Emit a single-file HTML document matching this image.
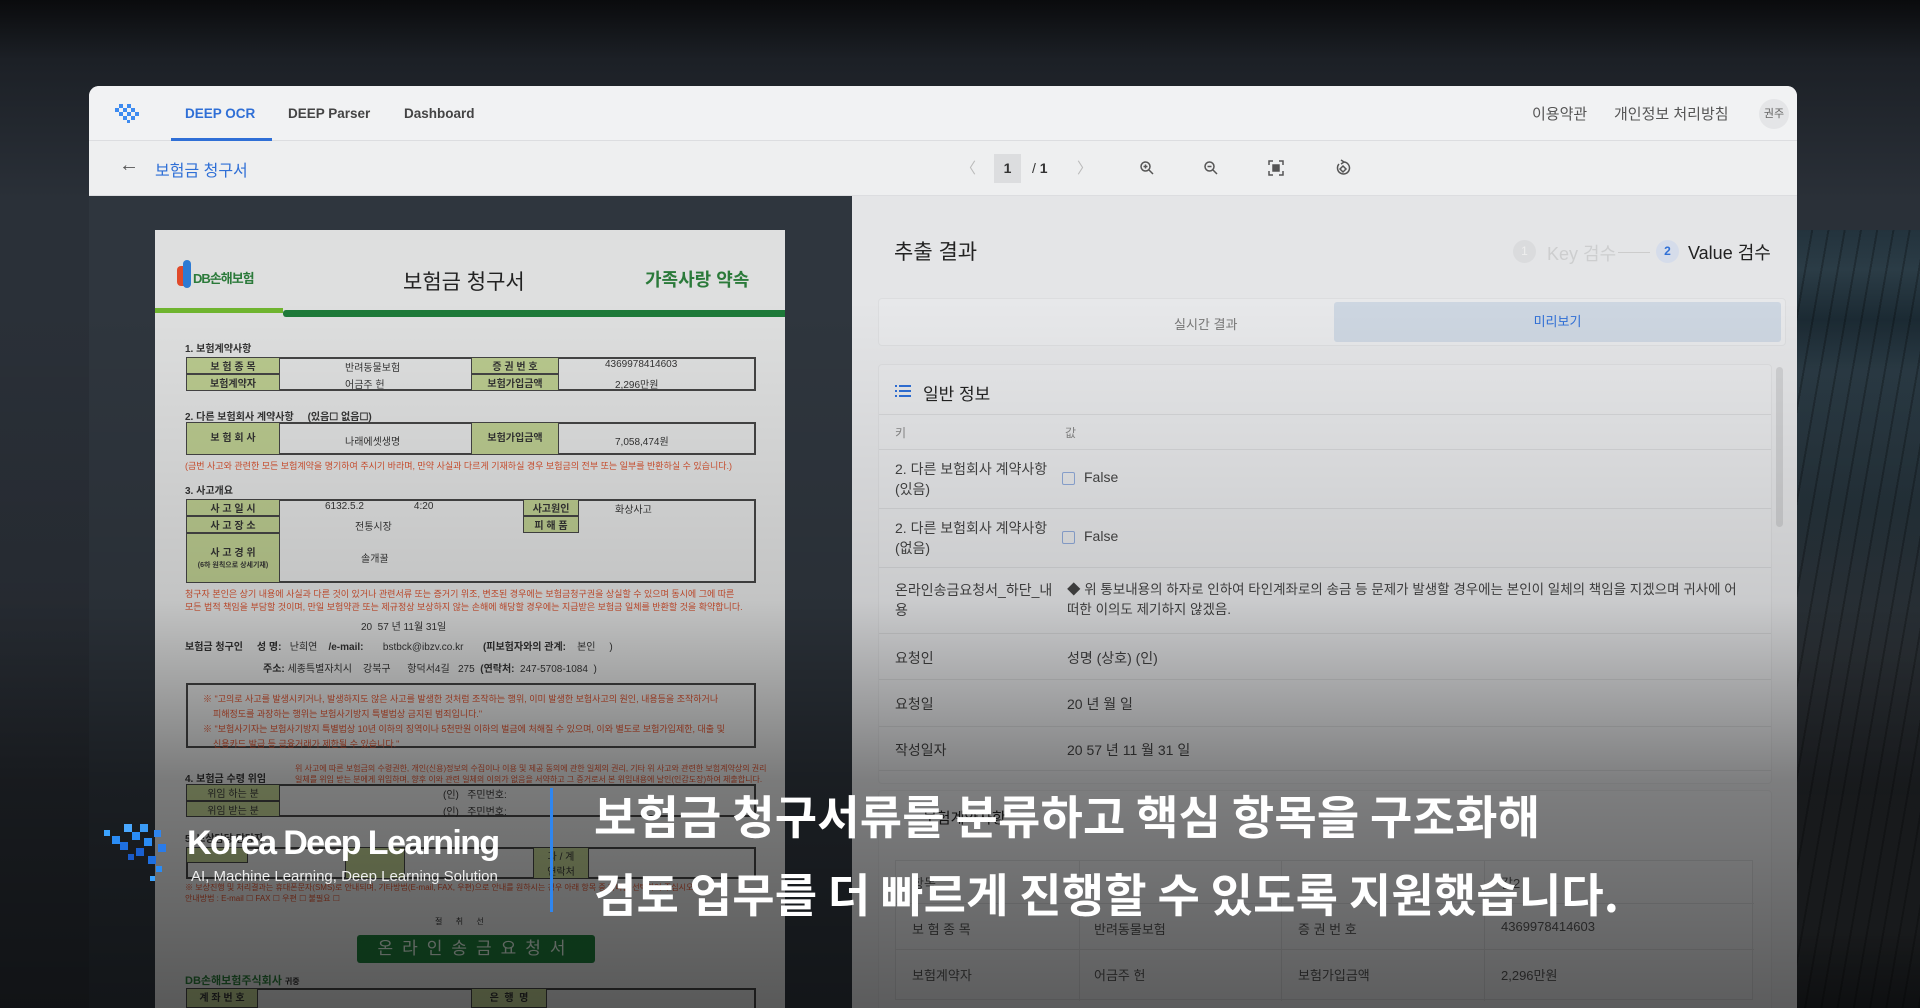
<!DOCTYPE html>
<html><head><meta charset="utf-8">
<style>
*{margin:0;padding:0;box-sizing:border-box}
body{width:1920px;height:1008px;overflow:hidden;position:relative;font-family:"Liberation Sans","Noto Sans CJK KR",sans-serif;background:#16191d}
.a{position:absolute}
.bg{left:0;top:0;width:1920px;height:1008px;background:linear-gradient(180deg,#0a0b0d 0,#1c2026 60px,#2a3038 200px,#2b3037 1008px)}
.bldg{left:1797px;top:230px;width:123px;height:778px;background:
repeating-linear-gradient(100deg,transparent 0 14px,rgba(0,0,0,.25) 14px 16px),
linear-gradient(180deg,#23333d 0,#2b3c46 40px,#1b2a33 90px,#2a3a44 140px,#25323a 280px,#30363c 420px,#2b2f34 560px,#363a3e 700px,#22262a 778px)}
.win{left:89px;top:86px;width:1708px;height:922px;background:#f1f2f3;border-radius:10px 10px 0 0;overflow:hidden}
.nav{left:0;top:0;width:1708px;height:55px;border-bottom:1px solid #dcdde0;background:#f1f2f3}
.tb{left:0;top:55px;width:1708px;height:55px;border-bottom:1px solid #dcdde0;background:#eeeff0}
.t{white-space:nowrap}
.lp{left:0;top:110px;width:763px;height:812px;background:#2f363e}
.paper{left:66px;top:34px;width:630px;height:800px;background:#dedfdf;overflow:hidden;color:#333;font-size:10px}
.rp{left:763px;top:110px;width:945px;height:812px;background:#e4e5e7}
.cell{position:absolute;border:1px solid #444}
.lab{position:absolute;background:#b9c98e;border:1px solid #444;text-align:center;font-weight:bold;color:#333}
.red{color:#d2502f;font-size:9px}
.row{position:absolute;left:0;width:894px;border-top:1px solid #d6d7d9;font-size:14px;color:#444}
.shade{left:0;top:0;width:1920px;height:1008px;background:linear-gradient(180deg,rgba(0,0,0,0) 0,rgba(0,0,0,0) 300px,rgba(0,0,0,.12) 600px,rgba(0,0,0,.45) 780px,rgba(0,0,0,.6) 1008px)}
.sub{left:594px;color:#fff;font-family:"Noto Sans CJK KR",sans-serif;font-weight:700;font-size:46px;letter-spacing:0.2px;white-space:nowrap}
</style></head><body>
<div class="a bg"></div>
<div class="a bldg"></div>
<div class="a win">
 <div class="a nav">
  <svg class="a" style="left:24px;top:14px" width="32" height="30" viewBox="0 0 32 30">
   <g fill="#3d8bf0"><rect x="2" y="8" width="4" height="4"/><rect x="6" y="4" width="4" height="4"/><rect x="10" y="8" width="4" height="4"/><rect x="14" y="4" width="4" height="4"/><rect x="18" y="8" width="4" height="4"/><rect x="6" y="12" width="4" height="4"/><rect x="14" y="12" width="4" height="4"/><rect x="22" y="12" width="4" height="4"/><rect x="10" y="16" width="4" height="4"/><rect x="18" y="16" width="4" height="4"/><rect x="14" y="20" width="3" height="3"/></g></svg>
  <div class="a t" style="left:96px;top:20px;font-size:13.5px;font-weight:bold;color:#2f6fd6">DEEP OCR</div>
  <div class="a" style="left:82px;top:52px;width:101px;height:3px;background:#2f6fd6"></div>
  <div class="a t" style="left:199px;top:20px;font-size:13.5px;font-weight:bold;color:#444">DEEP Parser</div>
  <div class="a t" style="left:315px;top:20px;font-size:13.5px;font-weight:bold;color:#444">Dashboard</div>
  <div class="a t" style="left:1443px;top:17px;font-size:15px;color:#555">이용약관</div>
  <div class="a t" style="left:1525px;top:17px;font-size:15px;color:#555">개인정보 처리방침</div>
  <div class="a" style="left:1670px;top:13px;width:30px;height:30px;border-radius:50%;background:#e4e5e7;font-size:11px;color:#666;text-align:center;line-height:30px">권주</div>
 </div>
 <div class="a tb">
  <div class="a t" style="left:30px;top:13px;font-size:20px;color:#555">←</div>
  <div class="a t" style="left:66px;top:16px;font-size:16px;color:#2f6fd6">보험금 청구서</div>
  <div class="a t" style="left:872px;top:16px;font-size:15px;color:#bbb">〈</div>
  <div class="a" style="left:905px;top:13px;width:27px;height:29px;background:#dcdddf;text-align:center;line-height:29px;font-size:14px;font-weight:bold;color:#333">1</div>
  <div class="a t" style="left:943px;top:19px;font-size:14px;color:#333">/ <b>1</b></div>
  <div class="a t" style="left:988px;top:16px;font-size:15px;color:#bbb">〉</div>
  <svg class="a" style="left:1050px;top:19px" width="16" height="16" viewBox="0 0 16 16" fill="none" stroke="#555" stroke-width="1.5"><circle cx="6.5" cy="6.5" r="4.5"/><path d="M10 10l4 4M4.5 6.5h4M6.5 4.5v4"/></svg>
  <svg class="a" style="left:1114px;top:19px" width="16" height="16" viewBox="0 0 16 16" fill="none" stroke="#555" stroke-width="1.5"><circle cx="6.5" cy="6.5" r="4.5"/><path d="M10 10l4 4M4.5 6.5h4"/></svg>
  <svg class="a" style="left:1179px;top:19px" width="16" height="16" viewBox="0 0 16 16" fill="none" stroke="#555" stroke-width="1.5"><path d="M1 5V1h4M11 1h4v4M15 11v4h-4M5 15H1v-4"/><rect x="5" y="5" width="6" height="6" fill="#555"/></svg>
  <svg class="a" style="left:1246px;top:18px" width="16" height="18" viewBox="0 0 16 18" fill="none" stroke="#555" stroke-width="1.5"><path d="M4 5a6 6 0 1 0 5-2"/><path d="M6 1l3 2-3 2"/><path d="M8 7l3 3-3 3-3-3z"/></svg>
 </div>
 <div class="a lp">
  <div class="a paper">
   <div class="a" style="left:22px;top:36px;width:8px;height:20px;background:#e04a2a;border-radius:4px 0 0 4px"></div>
   <div class="a" style="left:28px;top:30px;width:8px;height:28px;background:#2d7bd4;border-radius:4px"></div>
   <div class="a t" style="left:38px;top:38px;font-size:13px;font-weight:bold;color:#2b7a3a;letter-spacing:-1px">DB손해보험</div>
   <div class="a t" style="left:248px;top:36px;font-size:21px;color:#222">보험금 청구서</div>
   <div class="a t" style="left:490px;top:36px;font-size:18px;color:#2b7a3a;font-weight:bold">가족사랑 약속</div>
   <div class="a" style="left:0;top:78px;width:128px;height:5px;background:#6fb52f"></div>
   <div class="a" style="left:128px;top:80px;width:502px;height:7px;background:#1e7a39;border-radius:3px 0 0 3px"></div>
   <div class="a t" style="left:30px;top:110px;font-weight:bold">1. 보험계약사항</div>
   <div class="cell" style="left:31px;top:127px;width:570px;height:34px;border-width:2px"></div>
   <div class="lab" style="left:31px;top:127px;width:94px;height:17px">보 험 종 목</div>
   <div class="lab" style="left:31px;top:144px;width:94px;height:17px">보험계약자</div>
   <div class="lab" style="left:316px;top:127px;width:88px;height:17px">증 권 번 호</div>
   <div class="lab" style="left:316px;top:144px;width:88px;height:17px">보험가입금액</div>
   <div class="a t" style="left:190px;top:129px">반려동물보험</div><div class="a t" style="left:190px;top:146px">어금주 헌</div>
   <div class="a t" style="left:450px;top:129px">4369978414603</div><div class="a t" style="left:460px;top:146px">2,296만원</div>
   <div class="a t" style="left:30px;top:178px;font-weight:bold">2. 다른 보험회사 계약사항 &nbsp;&nbsp;&nbsp;&nbsp;(있음☐ 없음☐)</div>
   <div class="cell" style="left:31px;top:192px;width:570px;height:33px;border-width:2px"></div>
   <div class="lab" style="left:31px;top:192px;width:94px;height:33px;line-height:31px">보 험 회 사</div>
   <div class="lab" style="left:316px;top:192px;width:88px;height:33px;line-height:31px">보험가입금액</div>
   <div class="a t" style="left:190px;top:203px">나래에셋생명</div><div class="a t" style="left:460px;top:203px">7,058,474원</div>
   <div class="a t red" style="left:30px;top:229px">(금번 사고와 관련한 모든 보험계약을 명기하여 주시기 바라며, 만약 사실과 다르게 기재하실 경우 보험금의 전부 또는 일부를 반환하실 수 있습니다.)</div>
   <div class="a t" style="left:30px;top:252px;font-weight:bold">3. 사고개요</div>
   <div class="cell" style="left:31px;top:269px;width:570px;height:84px;border-width:2px"></div>
   <div class="lab" style="left:31px;top:269px;width:94px;height:17px">사 고 일 시</div>
   <div class="lab" style="left:31px;top:286px;width:94px;height:17px">사 고 장 소</div>
   <div class="lab" style="left:31px;top:303px;width:94px;height:50px;padding-top:10px">사 고 경 위<br><span style="font-size:7px">(6하 원칙으로 상세기재)</span></div>
   <div class="lab" style="left:368px;top:269px;width:56px;height:17px">사고원인</div>
   <div class="lab" style="left:368px;top:286px;width:56px;height:17px">피 해 품</div>
   <div class="a t" style="left:170px;top:271px">6132.5.2 &nbsp;&nbsp;&nbsp;&nbsp;&nbsp;&nbsp;&nbsp;&nbsp;&nbsp;&nbsp;&nbsp;&nbsp;&nbsp;&nbsp;&nbsp;&nbsp;&nbsp;4:20</div>
   <div class="a t" style="left:460px;top:271px">화상사고</div>
   <div class="a t" style="left:200px;top:288px">전통시장</div><div class="a t" style="left:206px;top:320px">솔개꿀</div>
   <div class="a t red" style="left:30px;top:357px">청구자 본인은 상기 내용에 사실과 다른 것이 있거나 관련서류 또는 증거기 위조, 변조된 경우에는 보험금청구권을 상실할 수 있으며 동시에 그에 따른<br>모든 법적 책임을 부담할 것이며, 만일 보험약관 또는 제규정상 보상하지 않는 손해에 해당할 경우에는 지급받은 보험금 일체를 반환할 것을 확약합니다.</div>
   <div class="a t" style="left:206px;top:388px">20 &nbsp;57 년 11월 31일</div>
   <div class="a t" style="left:30px;top:408px"><b>보험금 청구인</b> &nbsp;&nbsp;&nbsp;&nbsp;<b>성 명:</b> &nbsp;&nbsp;난희연 &nbsp;&nbsp;&nbsp;<b>/e-mail:</b> &nbsp;&nbsp;&nbsp;&nbsp;&nbsp;&nbsp;bstbck@ibzv.co.kr &nbsp;&nbsp;&nbsp;&nbsp;&nbsp;&nbsp;<b>(피보험자와의 관계:</b> &nbsp;&nbsp;&nbsp;본인 &nbsp;&nbsp;&nbsp;&nbsp;)</div>
   <div class="a t" style="left:108px;top:430px"><b>주소:</b> 세종특별자치시 &nbsp;&nbsp;&nbsp;강북구 &nbsp;&nbsp;&nbsp;&nbsp;&nbsp;항덕서4길 &nbsp;&nbsp;275 &nbsp;<b>(연락처:</b> &nbsp;247-5708-1084 &nbsp;)</div>
   <div class="cell" style="left:31px;top:453px;width:570px;height:65px;border-width:2px"></div>
   <div class="a t red" style="left:48px;top:462px;line-height:15px">※ "고의로 사고를 발생시키거나, 발생하지도 않은 사고를 발생한 것처럼 조작하는 행위, 이미 발생한 보험사고의 원인, 내용등을 조작하거나<br>&nbsp;&nbsp;&nbsp;&nbsp;피해정도를 과장하는 행위는 보험사기방지 특별법상 금지된 범죄입니다."<br>※ "보험사기자는 보험사기방지 특별법상 10년 이하의 징역이나 5천만원 이하의 벌금에 처해질 수 있으며, 이와 별도로 보험가입제한, 대출 및<br>&nbsp;&nbsp;&nbsp;&nbsp;신용카드 발급 등 금융거래가 제한될 수 있습니다."</div>
   <div class="a t" style="left:30px;top:540px;font-weight:bold">4. 보험금 수령 위임</div>
   <div class="a t red" style="left:140px;top:533px;font-size:8px">위 사고에 따른 보험금의 수령권한, 개인(신용)정보의 수집이나 이용 및 제공 동의에 관한 일체의 권리, 기타 위 사고와 관련한 보험계약상의 권리<br>일체를 위임 받는 분에게 위임하며, 향후 이와 관련 일체의 이의가 없음을 서약하고 그 증거로서 본 위임내용에 날인(인감도장)하여 제출합니다.</div>
   <div class="cell" style="left:31px;top:554px;width:570px;height:33px;border-width:2px"></div>
   <div class="lab" style="left:31px;top:554px;width:94px;height:17px;font-weight:normal">위임 하는 분</div>
   <div class="lab" style="left:31px;top:571px;width:94px;height:16px;font-weight:normal">위임 받는 분</div>
   <div class="a t" style="left:288px;top:556px">(인) &nbsp;&nbsp;주민번호:</div><div class="a t" style="left:288px;top:573px">(인) &nbsp;&nbsp;주민번호:</div>
   <div class="a t" style="left:30px;top:600px;font-weight:bold">5. 보상담당 담당자</div>
   <div class="cell" style="left:31px;top:617px;width:570px;height:32px;border-width:2px"></div>
   <div class="lab" style="left:31px;top:617px;width:62px;height:16px"></div>
   <div class="lab" style="left:190px;top:617px;width:60px;height:32px"></div>
   <div class="lab" style="left:378px;top:617px;width:56px;height:32px;font-weight:normal">과 / 계<br>연락처</div>
   <div class="a t red" style="left:30px;top:652px;font-size:8px">※ 보상진행 및 처리결과는 휴대폰문자(SMS)로 안내되며, 기타방법(E-mail, FAX, 우편)으로 안내를 원하시는 경우 아래 항목 중 하나를 선택하여 주십시오.<br>안내방법 : E-mail ☐ FAX ☐ 우편 ☐ 불필요 ☐</div>
   <div class="a t" style="left:280px;top:686px;font-size:8px">절 &nbsp;&nbsp;&nbsp;&nbsp;&nbsp;취 &nbsp;&nbsp;&nbsp;&nbsp;&nbsp;선</div>
   <div class="a" style="left:202px;top:705px;width:238px;height:28px;background:#1e7a39;border-radius:3px;color:#d8e8dc;font-size:17px;letter-spacing:9px;text-align:center;line-height:28px">온라인송금요청서</div>
   <div class="a t" style="left:30px;top:742px;font-size:11px;font-weight:bold;color:#2b7a3a">DB손해보험주식회사 <span style="font-size:8px;color:#333">귀중</span></div>
   <div class="cell" style="left:31px;top:758px;width:570px;height:40px;border-width:2px"></div>
   <div class="lab" style="left:31px;top:758px;width:72px;height:20px">계 좌 번 호</div>
   <div class="lab" style="left:316px;top:758px;width:76px;height:20px">은 &nbsp;행 &nbsp;명</div>
  </div>
 </div>
 <div class="a rp">
  <div class="a t" style="left:42px;top:40px;font-size:21px;color:#222">추출 결과</div>
  <div class="a" style="left:661px;top:44px;width:23px;height:23px;border-radius:50%;background:#dadbdd;color:#eee;font-size:12px;text-align:center;line-height:23px">1</div>
  <div class="a t" style="left:695px;top:44px;font-size:18px;color:#cdcecf">Key 검수</div>
  <div class="a" style="left:766px;top:56px;width:32px;height:1px;background:#ccc"></div>
  <div class="a" style="left:804px;top:44px;width:23px;height:23px;border-radius:50%;background:#d5dcea;color:#2f6fd6;font-size:12px;text-align:center;line-height:23px;font-weight:bold">2</div>
  <div class="a t" style="left:836px;top:43px;font-size:18px;color:#222">Value 검수</div>
  <div class="a" style="left:26px;top:102px;width:908px;height:48px;border:1px solid #dcdddf;border-radius:4px;background:#e7e8ea"></div>
  <div class="a t" style="left:322px;top:118px;font-size:13px;color:#777">실시간 결과</div>
  <div class="a" style="left:482px;top:106px;width:447px;height:40px;background:#cdd6e1;border-radius:3px;text-align:center;line-height:40px;font-size:13px;color:#2f6fd6">미리보기</div>
  <div class="a" style="left:26px;top:168px;width:894px;height:420px;border:1px solid #dcdddf;border-radius:4px;background:#e6e7e9;overflow:hidden">
   <svg class="a" style="left:16px;top:19px" width="16" height="14" viewBox="0 0 16 14" fill="#2f6fd6"><rect x="0" y="1" width="2" height="2"/><rect x="4" y="1" width="12" height="2"/><rect x="0" y="6" width="2" height="2"/><rect x="4" y="6" width="12" height="2"/><rect x="0" y="11" width="2" height="2"/><rect x="4" y="11" width="12" height="2"/></svg>
   <div class="a t" style="left:44px;top:15px;font-size:17px;color:#222">일반 정보</div>
   <div class="row" style="top:49px;height:35px"><span class="a" style="left:16px;top:9px;font-size:12px;color:#888">키</span><span class="a" style="left:186px;top:9px;font-size:12px;color:#888">값</span></div>
   <div class="row" style="top:84px;height:59px"><span class="a" style="left:16px;top:9px;line-height:20px">2. 다른 보험회사 계약사항<br>(있음)</span><span class="a" style="left:183px;top:22px;width:13px;height:13px;border:1.5px solid #8fa9d8;border-radius:2px"></span><span class="a" style="left:205px;top:19px">False</span></div>
   <div class="row" style="top:143px;height:59px"><span class="a" style="left:16px;top:9px;line-height:20px">2. 다른 보험회사 계약사항<br>(없음)</span><span class="a" style="left:183px;top:22px;width:13px;height:13px;border:1.5px solid #8fa9d8;border-radius:2px"></span><span class="a" style="left:205px;top:19px">False</span></div>
   <div class="row" style="top:202px;height:66px"><span class="a" style="left:16px;top:12px;line-height:20px">온라인송금요청서_하단_내<br>용</span><span class="a" style="left:188px;top:12px;line-height:20px;font-size:13.5px;width:680px">◆ 위 통보내용의 하자로 인하여 타인계좌로의 송금 등 문제가 발생할 경우에는 본인이 일체의 책임을 지겠으며 귀사에 어떠한 이의도 제기하지 않겠음.</span></div>
   <div class="row" style="top:268px;height:46px"><span class="a" style="left:16px;top:14px">요청인</span><span class="a" style="left:188px;top:14px">성명 (상호) (인)</span></div>
   <div class="row" style="top:314px;height:47px"><span class="a" style="left:16px;top:14px">요청일</span><span class="a" style="left:188px;top:14px">20 년 월 일</span></div>
   <div class="row" style="top:361px;height:44px"><span class="a" style="left:16px;top:13px">작성일자</span><span class="a" style="left:188px;top:13px">20 57 년 11 월 31 일</span></div>
   <div class="row" style="top:405px;height:20px"></div>
  </div>
  <div class="a" style="left:924px;top:171px;width:7px;height:160px;background:#cfd0d2;border-radius:4px"></div>
  <div class="a" style="left:26px;top:594px;width:894px;height:230px;border:1px solid #dcdddf;border-radius:4px;background:#e6e7e9">
   <span class="a t" style="left:44px;top:16px;font-size:15px;color:#222">보험계약사항</span>
  </div>
  <div class="a" style="left:43px;top:664px;width:858px;height:140px;border:1px solid #d4d5d7;background:#e8e9eb;font-size:13px;color:#555">
   <div class="a" style="left:0;top:42px;width:858px;border-top:1px solid #d4d5d7"></div>
   <div class="a" style="left:0;top:88px;width:858px;border-top:1px solid #d4d5d7"></div>
   <div class="a" style="left:183px;top:0;height:140px;border-left:1px solid #d4d5d7"></div>
   <div class="a" style="left:385px;top:0;height:140px;border-left:1px solid #d4d5d7"></div>
   <div class="a" style="left:588px;top:0;height:140px;border-left:1px solid #d4d5d7"></div>
   <span class="a" style="left:16px;top:12px">항목</span><span class="a" style="left:605px;top:12px">값2</span>
   <span class="a" style="left:16px;top:58px">보 험 종 목</span><span class="a" style="left:198px;top:58px">반려동물보험</span><span class="a" style="left:402px;top:58px">증 권 번 호</span><span class="a" style="left:605px;top:58px">4369978414603</span>
   <span class="a" style="left:16px;top:104px">보험계약자</span><span class="a" style="left:198px;top:104px">어금주 헌</span><span class="a" style="left:402px;top:104px">보험가입금액</span><span class="a" style="left:605px;top:104px">2,296만원</span>
  </div>
 </div>
</div>
<div class="a shade"></div>
<svg class="a" style="left:100px;top:820px" width="84" height="66" viewBox="0 0 84 66">
 <g fill="#2a8cf5"><rect x="4" y="10" width="6" height="6" fill="#3ba3ff"/><rect x="12" y="16" width="8" height="8"/><rect x="24" y="4" width="8" height="8" fill="#4aa8ff"/><rect x="32" y="12" width="8" height="8"/><rect x="20" y="22" width="8" height="8" fill="#1e6fe0"/><rect x="40" y="4" width="8" height="8" fill="#3a9af5"/><rect x="44" y="18" width="8" height="8"/><rect x="36" y="28" width="8" height="8" fill="#1a60d0"/><rect x="54" y="10" width="7" height="7" fill="#2f86ef"/><rect x="58" y="24" width="8" height="8" fill="#2a7be8"/><rect x="48" y="36" width="8" height="8" fill="#1e6fe0"/><rect x="56" y="46" width="6" height="6"/><rect x="50" y="56" width="5" height="5" fill="#3ba3ff"/><rect x="28" y="34" width="6" height="6" fill="#1a5ac8"/></g></svg>
<div class="a t" style="left:187px;top:824px;font-size:34px;font-weight:bold;color:#fff;letter-spacing:-1.6px">Korea Deep Learning</div>
<div class="a t" style="left:191px;top:868px;font-size:15px;color:#eee">AI, Machine Learning, Deep Learning Solution</div>
<div class="a" style="left:550px;top:788px;width:3px;height:124px;background:#2f86ef"></div>
<div class="a sub" style="top:782px">보험금 청구서류를 분류하고 핵심 항목을 구조화해</div>
<div class="a sub" style="top:860px">검토 업무를 더 빠르게 진행할 수 있도록 지원했습니다.</div>
</body></html>
